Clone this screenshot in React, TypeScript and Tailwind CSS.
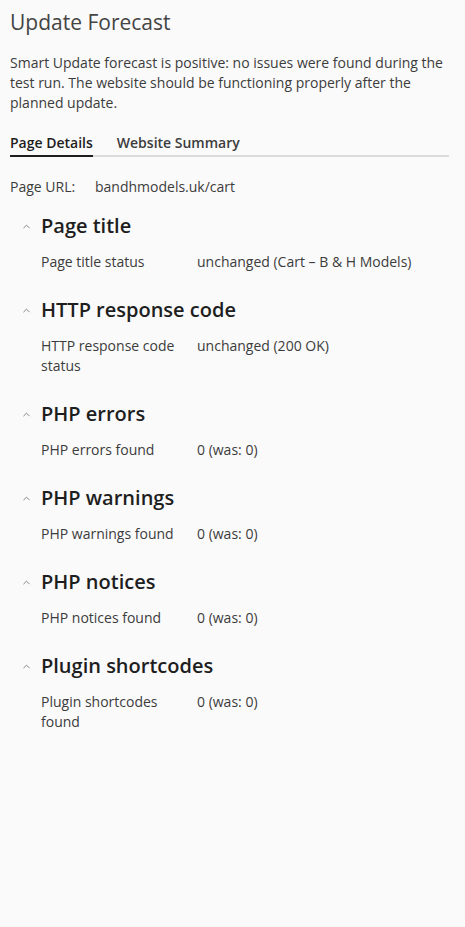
import { ChevronUp } from 'lucide-react';

interface Section {
    title: string;
    label: string;
    value: string;
}

const sections: Section[] = [
    { title: 'Page title', label: 'Page title status', value: 'unchanged (Cart – B & H Models)' },
    { title: 'HTTP response code', label: 'HTTP response code status', value: 'unchanged (200 OK)' },
    { title: 'PHP errors', label: 'PHP errors found', value: '0 (was: 0)' },
    { title: 'PHP warnings', label: 'PHP warnings found', value: '0 (was: 0)' },
    { title: 'PHP notices', label: 'PHP notices found', value: '0 (was: 0)' },
    { title: 'Plugin shortcodes', label: 'Plugin shortcodes found', value: '0 (was: 0)' },
];

export default function App() {
    return (
        <div
            className="min-h-[927px] w-[465px] bg-[#fafafa] pl-[10px] pr-4 pt-2 text-[#3c3c3c]"
            style={{ fontFamily: '"Open Sans", "Noto Sans", sans-serif' }}
        >
            <h1 className="text-[21px] leading-[28px] font-normal text-[#444]">Update Forecast</h1>

            <p className="mt-[17px] text-[14px] leading-[20px] text-[#3c3c3c]">
                Smart Update forecast is positive: no issues were found during the test run. The website should be
                functioning properly after the planned update.
            </p>

            {/* Tabs */}
            <div className="mt-5 flex w-[439px] border-b-2 border-[#dcdcdc] text-[14px] leading-[20px] font-semibold">
                <div className="-mb-[2px] border-b-2 border-[#1e1e1e] pb-[2px] text-[#1e1e1e]">Page Details</div>
                <div className="ml-6 pb-[2px] text-[#3c3c3c]">Website Summary</div>
            </div>

            <div className="mt-5 flex text-[14px] leading-[20px]">
                <span className="w-[85px]">Page URL:</span>
                <span>bandhmodels.uk/cart</span>
            </div>

            <div className="mt-[15px] flex flex-col gap-6">
                {sections.map(s => (
                    <div key={s.title}>
                        <div className="flex items-center">
                            <div className="flex w-[31px] justify-center">
                                <ChevronUp size={11} strokeWidth={1.5} className="ml-[2px] text-[#555]" />
                            </div>
                            <h2 className="text-[20px] leading-[28px] font-semibold text-[#1e1e1e]">{s.title}</h2>
                        </div>
                        <div className="mt-3 flex pl-[31px] text-[14px] leading-[20px]">
                            <span className="mr-2 w-[148px]">{s.label}</span>
                            <span>{s.value}</span>
                        </div>
                    </div>
                ))}
            </div>
        </div>
    );
}
